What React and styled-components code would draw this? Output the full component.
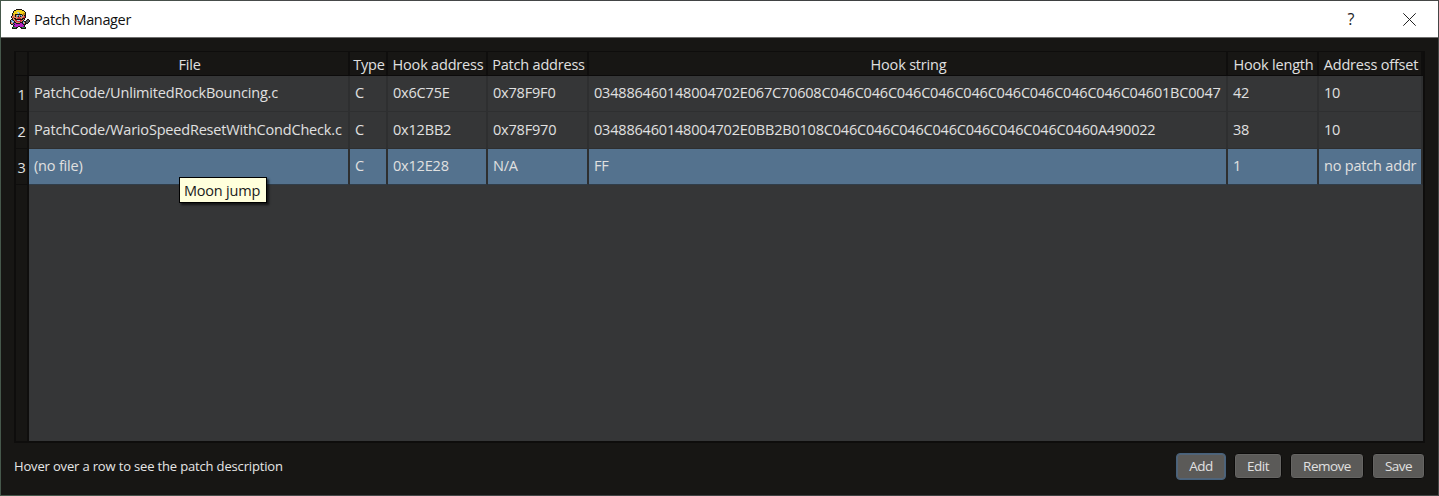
import React from "react";
import styled, { createGlobalStyle, css } from "styled-components";

const Global = createGlobalStyle`
  * { box-sizing: border-box; }
  body { margin: 0; background: #39443d; overflow: hidden; }
`;

const Desktop = styled.div`
  width: 1439px;
  height: 496px;
  padding: 1px;
  background: linear-gradient(90deg, #46584b 0, #47494a 20%, #3d3f40 70%, #454746 100%);
  font-family: "Open Sans", "Noto Sans", sans-serif;
  font-size: 14.5px;
  letter-spacing: -0.2px;
  white-space: nowrap;
`;

const Dialog = styled.main`
  height: 494px;
  display: flex;
  flex-direction: column;
  background: #171614;
`;

const TitleBar = styled.header`
  height: 37px;
  flex: none;
  display: flex;
  align-items: center;
  padding-left: 9px;
  background: #fff;
  border-bottom: 1px solid #6f6f6e;
  color: #111;
`;

const Title = styled.h1`
  flex: 1;
  margin: 0 0 0 4px;
  font-size: 14.5px;
  font-weight: 400;
  letter-spacing: -0.35px;
`;

const WindowButton = styled.button`
  width: 58px;
  height: 36px;
  padding: 0;
  display: flex;
  align-items: center;
  justify-content: center;
  border: 0;
  background: none;
  color: #222;
  font: 16px "Open Sans", sans-serif;
`;

const Content = styled.section`
  flex: 1;
  padding: 13px 13px 0;
  display: flex;
  flex-direction: column;
`;

const Table = styled.div`
  position: relative;
  height: 392px;
  flex: none;
  display: flex;
  flex-direction: column;
  border: 2px solid #0e0d0c;
  border-top-width: 1px;
  background: #353637;
  color: #e0e0e0;
`;

const columns = "13px 321px 38px 100px 101px 639px 91px 104px";

const HeaderRow = styled.div`
  display: grid;
  grid-template-columns: ${columns};
  height: 24px;
  flex: none;
  background: #171614;
  border-bottom: 1px solid #0c0b0b;
`;

const HeaderCell = styled.div`
  display: flex;
  align-items: center;
  justify-content: center;
  padding: 2px 0 0 2px;
  border-right: 2px solid #0f0e0d;
`;

const Row = styled.div`
  display: grid;
  grid-template-columns: ${columns};
  height: ${(p) => p.$height}px;
  flex: none;
`;

const RowNumber = styled.div`
  display: flex;
  align-items: center;
  justify-content: center;
  padding-top: 2px;
  background: #171614;
  border-right: 2px solid #0f0e0d;
  border-bottom: 1px solid #0f0e0d;
`;

const Cell = styled.div`
  display: flex;
  align-items: center;
  padding: 0 0 2px 5px;
  border-right: 2px solid #2e2f30;
  border-bottom: 1px solid #2e2f30;
  letter-spacing: -0.19px;
  ${(p) =>
    p.$selected &&
    css`
      background: #54728e;
      border-bottom-color: #303d49;
    `}
`;

const Gutter = styled.div`
  flex: 1;
  width: 13px;
  background: #171614;
  border-right: 2px solid #0f0e0d;
`;

const Tooltip = styled.div`
  position: absolute;
  left: 163px;
  top: 125px;
  width: 88px;
  height: 26px;
  display: flex;
  align-items: center;
  justify-content: center;
  padding-right: 2px;
  background: #ffffdc;
  border: 1px solid #000;
  box-shadow: 2px 2px 2px rgba(0, 0, 0, 0.6);
  color: #1a1a1a;
`;

const Footer = styled.footer`
  display: flex;
  align-items: center;
  gap: 8px;
  height: 28px;
  margin-top: 9px;
  font-size: 13px;
  color: #e6e6e6;
`;

const Hint = styled.span`
  flex: 1;
  letter-spacing: -0.16px;
`;

const Button = styled.button`
  width: ${(p) => p.$width}px;
  height: ${(p) => (p.$focused ? 27 : 26)}px;
  padding: 0 0 1px;
  border: 1px solid ${(p) => (p.$focused ? "#46617c" : "#0c0b0a")};
  border-radius: 4px;
  background: #5b5a58;
  box-shadow: inset 0 0 0 1px ${(p) => (p.$focused ? "#526477" : "#656462")};
  color: #e0e0e0;
  font: 13.5px "Open Sans", sans-serif;
  letter-spacing: -0.5px;
`;

const palette = {
  K: "#1b1512", Y: "#f4d31d", O: "#b98a12", S: "#e08a62", R: "#c4283c",
  W: "#a9cbe6", P: "#b321c4", D: "#6c1780", B: "#3d7fb4", G: "#555c60", N: "#2c8a4c",
};

const sprite = [
  "......KKKKKK........",
  "....KKYYYYYYKK......",
  "...KYYYYYYYYYYK.....",
  "...KYYYWWYYYYYYK....",
  "..KYYYYYWBYYYOOK....",
  "..KOYKKKKKKKOOOK....",
  "..KSSKSWBSBWKSKK....",
  ".KSSSKSBKSKBSSRK....",
  ".KSRSSSSRRSSSRRK....",
  "..KSKKSRRRRSKKK.....",
  ".KKSSKKKKKKKKSK..KK.",
  "KWBKSRRWWWRRSK..KGGK",
  "KBWWKSRRRRRSKBKKGGGK",
  "KSWBKKSSSSKKKWSKGGK.",
  "KSSKPPKKKKPPKBSKKK..",
  ".KKBKPPPPPPPPKKK....",
  "...KPPPPPPPPPPK.....",
  "...KDPPPKKPPPDK.....",
  "..KNNNKK..KKNNNK....",
  "..KKKKK....KKKKK....",
];

function AppIcon() {
  return (
    <svg width="20" height="20" viewBox="0 0 20 20" shapeRendering="crispEdges" aria-hidden="true">
      {sprite.flatMap((line, y) =>
        [...line].map((c, x) =>
          c === "." ? null : <rect key={`${x}-${y}`} x={x} y={y} width="1" height="1" fill={palette[c]} />
        )
      )}
    </svg>
  );
}

const headers = ["", "File", "Type", "Hook address", "Patch address", "Hook string", "Hook length", "Address offset"];

const nops = (n) => "C046".repeat(n);

const rows = [
  { height: 36, cells: ["PatchCode/UnlimitedRockBouncing.c", "C", "0x6C75E", "0x78F9F0", `034886460148004702E067C70608${nops(10)}01BC0047`, "42", "10"] },
  { height: 37, cells: ["PatchCode/WarioSpeedResetWithCondCheck.c", "C", "0x12BB2", "0x78F970", `034886460148004702E0BB2B0108${nops(8)}0A490022`, "38", "10"] },
  { height: 36, selected: true, cells: ["(no file)", "C", "0x12E28", "N/A", "FF", "1", "no patch addr"] },
];

export default function App() {
  return (
    <Desktop>
      <Global />
      <Dialog>
        <TitleBar>
          <AppIcon />
          <Title>Patch Manager</Title>
          <WindowButton aria-label="Help">?</WindowButton>
          <WindowButton aria-label="Close">
            <svg width="13" height="13" viewBox="0 0 13 13" fill="none" stroke="#222" strokeWidth="1">
              <path d="M0.3 0.3 12.7 12.7M12.7 0.3 0.3 12.7" />
            </svg>
          </WindowButton>
        </TitleBar>
        <Content>
          <Table>
            <HeaderRow>
              {headers.map((h, i) => (
                <HeaderCell key={i}>{h}</HeaderCell>
              ))}
            </HeaderRow>
            {rows.map((row, r) => (
              <Row key={r} $height={row.height}>
                <RowNumber>{r + 1}</RowNumber>
                {row.cells.map((text, c) => (
                  <Cell key={c} $selected={row.selected}>
                    {text}
                  </Cell>
                ))}
              </Row>
            ))}
            <Gutter />
            <Tooltip>Moon jump</Tooltip>
          </Table>
          <Footer>
            <Hint>Hover over a row to see the patch description</Hint>
            <Button $width={50} $focused>Add</Button>
            <Button $width={48}>Edit</Button>
            <Button $width={74}>Remove</Button>
            <Button $width={53}>Save</Button>
          </Footer>
        </Content>
      </Dialog>
    </Desktop>
  );
}
